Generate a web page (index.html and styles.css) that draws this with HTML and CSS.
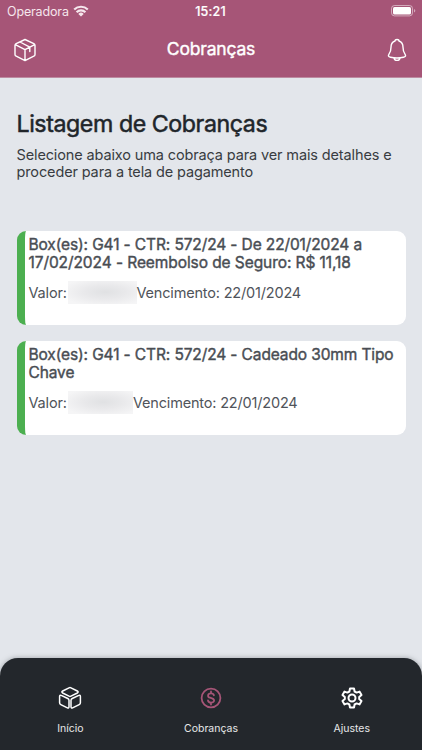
FILE: index.html
```html
<!DOCTYPE html>
<html lang="pt-BR">
<head>
<meta charset="utf-8">
<title>Cobranças</title>
<link rel="stylesheet" href="styles.css">
</head>
<body>
<div class="screen">
  <header class="header">
    <div class="status">
      <div class="carrier"><span>Operadora</span>
        <svg class="wifi" viewBox="0 0 16 12"><path d="M1.2 4.5a9.8 9.8 0 0 1 13.6 0M3.6 7.2a6.2 6.2 0 0 1 8.8 0" fill="none" stroke="currentColor" stroke-width="2.2"/><path d="M5.3 8.9a3.9 3.9 0 0 1 5.4 0L8 11.6z" fill="currentColor"/></svg>
      </div>
      <span class="clock">15:21</span>
      <svg class="battery" viewBox="0 0 25 12"><rect x=".5" y=".5" width="21" height="10.4" rx="3" fill="none" stroke="currentColor" opacity=".5"/><rect x="2" y="2" width="18" height="7.4" rx="1.5" fill="currentColor"/><path d="M23 4v3.6q1.3-.5 1.3-1.8T23 4z" fill="currentColor" opacity=".5"/></svg>
    </div>
    <div class="toolbar">
      <svg class="icon" viewBox="0 0 24 24"><path d="M12 1.5 20.8 5.7Q22 6.4 22 7.6V16.4Q22 17.6 20.8 18.2L12 22.6 3.2 18.2Q2 17.6 2 16.4V7.6Q2 6.4 3.2 5.7zM2.3 6.7 12 11.6 21.7 6.7M12 11.6V22.5M7 4 16.8 9.2V13.5"/></svg>
      <h1 class="bar-title">Cobranças</h1>
      <svg class="icon bell" viewBox="0 0 24 24"><path d="M10 3Q10 1.5 12 1.5T14 3C17 4 18 6.5 18 9.3C18 13.5 18.5 14.2 20 16.2C21.2 17.8 20.5 18.8 18.5 19.2Q12 20.7 5.5 19.2C3.5 18.8 2.8 17.8 4 16.2C5.5 14.2 6 13.5 6 9.3C6 6.5 7 4 10 3zM9 20Q9.5 22.4 12 22.4T15 20"/></svg>
    </div>
  </header>
  <main class="content">
    <h2 class="title">Listagem de Cobranças</h2>
    <p class="intro">Selecione abaixo uma cobraça para ver mais detalhes e<br>proceder para a tela de pagamento</p>
    <section class="list">
      <article class="card">
        <h3 class="card-title">Box(es): G41 - CTR: 572/24 - De 22/01/2024 a<br><span class="reimbursement">17/02/2024 - Reembolso de Seguro: R$ 11,18</span></h3>
        <div class="details"><span class="label">Valor:</span><span class="redacted"></span><span>Vencimento: 22/01/2024</span></div>
      </article>
      <article class="card">
        <h3 class="card-title">Box(es): G41 - CTR: 572/24 - Cadeado 30mm Tipo<br>Chave</h3>
        <div class="details"><span class="label">Valor:</span><span class="redacted short"></span><span>Vencimento: 22/01/2024</span></div>
      </article>
    </section>
  </main>
  <nav class="tabs">
    <div class="tab">
      <svg class="icon boxes" viewBox="0 0 24 24"><path d="M11 1.8Q12 1.3 13 1.8L19.3 5Q21 6 19.3 7L13 10.2Q12 10.7 11 10.2L4.7 7Q3 6 4.7 5zM3.2 9.4 9.8 12.5Q11 13.1 11 14.2V20.8Q11 22.6 9.4 21.8L2.8 18.6Q1.6 18 1.6 16.8V10.6Q1.6 8.6 3.2 9.4zM20.8 9.4 14.2 12.5Q13 13.1 13 14.2V20.8Q13 22.6 14.6 21.8L21.2 18.6Q22.4 18 22.4 16.8V10.6Q22.4 8.6 20.8 9.4z"/></svg>
      <span>Início</span>
    </div>
    <div class="tab">
      <svg class="icon active" viewBox="0 0 24 24"><circle cx="12" cy="12" r="9.4"/><path d="M14.9 9.3Q14.5 7.4 12 7.4C8.3 7.4 8.3 11 11 11.7L13 12.3C16.2 13.3 15.6 16.6 12 16.6Q9.4 16.6 9 14.5M12 5.5V7.4M12 16.6V18.5"/></svg>
      <span>Cobranças</span>
    </div>
    <div class="tab">
      <svg class="icon gear" viewBox="0 0 24 24"><path d="M10 2.5h4l.6 3 2 1.1 2.9-1 2 3.4-2.3 2v2l2.3 2-2 3.4-2.9-1-2 1.1-.6 3h-4l-.6-3-2-1.1-2.9 1-2-3.4 2.3-2v-2l-2.3-2 2-3.4 2.9 1 2-1.1z"/><circle cx="12" cy="12" r="3.5"/></svg>
      <span>Ajustes</span>
    </div>
  </nav>
</div>
</body>
</html>
```
FILE: styles.css
```css
* { box-sizing: border-box; }
body { margin: 0; font-family: Inter, "Liberation Sans", sans-serif; }
h1, h2, h3, p { margin: 0; font-weight: 400; }
.screen { width: 422px; height: 750px; display: flex; flex-direction: column; background: #e3e6eb; overflow: hidden; }
.header { height: 78px; background: #a65577; color: #fff; border-bottom: 1px solid #bd8ba1; }
.status { height: 22px; display: grid; grid-template-columns: 1fr auto 1fr; align-items: center; padding: 0 6px 0 7px; }
.carrier { display: flex; align-items: center; gap: 4px; font-size: 12.5px; letter-spacing: -.15px; color: #f5e6ec; }
.wifi { width: 16px; height: 12px; margin-top: -1px; }
.clock { font-size: 12.5px; font-weight: 500; letter-spacing: .2px; -webkit-text-stroke: .2px currentColor; transform: translateX(-1px); }
.battery { width: 25px; height: 12px; justify-self: end; }
.toolbar { height: 55px; display: flex; align-items: center; justify-content: space-between; padding: 0 13px 0 13px; }
.icon { width: 24px; height: 24px; display: block; fill: none; stroke: currentColor; stroke-width: 1.4; stroke-linejoin: round; stroke-linecap: round; }
.bar-title { font-size: 17.5px; line-height: 24px; letter-spacing: -.18px; margin-top: -2px; -webkit-text-stroke: .4px currentColor; }
.content { flex: 1; padding: 32px 16.5px 0; }
.title { color: #20252a; font-size: 23.2px; line-height: 28px; letter-spacing: -.43px; -webkit-text-stroke: .5px currentColor; }
.intro { margin-top: 8px; color: #383c41; font-size: 14.5px; line-height: 17px; letter-spacing: -.13px; white-space: nowrap; }
.list { margin-top: 50.5px; display: flex; flex-direction: column; gap: 16px; }
.card { height: 94px; padding: 5px 0 0 4px; background: #fff; border-left: 8.5px solid #4caf50; border-radius: 9px; color: #50545a; }
.card-title { color: #494d53; font-size: 15.5px; line-height: 18.5px; letter-spacing: -.12px; -webkit-text-stroke: .4px currentColor; white-space: nowrap; }
.reimbursement { letter-spacing: -.08px; }
.details { display: flex; align-items: center; height: 23px; margin-top: 8px; font-size: 14.5px; letter-spacing: -.18px; white-space: nowrap; }
.label { width: 39.5px; }
.redacted { width: 68.5px; height: 23px; background: radial-gradient(ellipse at 54% 48%, #e0e1e3 0%, #e9e9eb 40%, #f5f5f6 85%); }
.short { width: 65px; }
.tabs { height: 92px; display: flex; background: #23272c; color: #fff; border-radius: 18px 18px 0 0; box-shadow: 0 0 5px #555a6080; }
.tab { flex: 1; display: flex; flex-direction: column; align-items: center; padding-top: 28px; font-size: 10.5px; line-height: 14px; letter-spacing: 0; }
.tab span { margin-top: 12px; color: #e7e8e9; }
.boxes { stroke-width: 1.5; }
.active { color: #a65577; stroke-width: 1.8; }
.gear { stroke-width: 2; }
```
